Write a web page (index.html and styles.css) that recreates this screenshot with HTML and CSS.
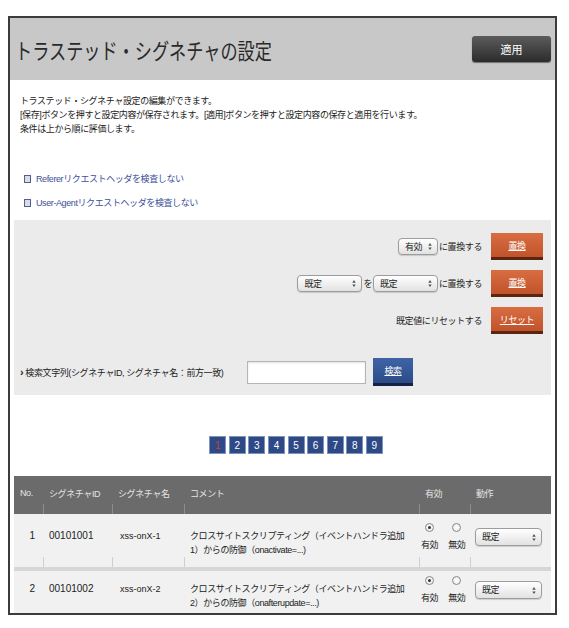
FILE: index.html
```html
<!DOCTYPE html>
<html lang="ja">
<head>
    <meta charset="UTF-8">
    <title>トラステッド・シグネチャの設定</title>
    <link rel="stylesheet" href="styles.css">
</head>
<body>
    <div class="frame">
        <div class="page-head">
            <h1>トラステッド・シグネチャの設定</h1>
            <a class="btn-apply">適用</a>
        </div>

        <div class="intro">
            <p>トラステッド・シグネチャ設定の編集ができます。<br>[保存]ボタンを押すと設定内容が保存されます。[適用]ボタンを押すと設定内容の保存と適用を行います。<br>条件は上から順に評価します。</p>
            <ul class="checks">
                <li><span class="box"></span>Refererリクエストヘッダを検査しない</li>
                <li><span class="box"></span>User-Agentリクエストヘッダを検査しない</li>
            </ul>
        </div>

        <!-- bulk actions + search -->
        <div class="panel">
            <div class="panel-row">
                <span class="select sel-short">有効<svg class="arrows" viewBox="0 0 4 8"><path d="M0 3L2 0L4 3ZM0 5L2 8L4 5Z"/></svg></span>
                <span class="txt">に置換する</span>
                <a class="btn-orange">置換</a>
            </div>
            <div class="panel-row">
                <span class="select sel-long">既定<svg class="arrows" viewBox="0 0 4 8"><path d="M0 3L2 0L4 3ZM0 5L2 8L4 5Z"/></svg></span>
                <span class="txt">を</span>
                <span class="select sel-long">既定<svg class="arrows" viewBox="0 0 4 8"><path d="M0 3L2 0L4 3ZM0 5L2 8L4 5Z"/></svg></span>
                <span class="txt">に置換する</span>
                <a class="btn-orange">置換</a>
            </div>
            <div class="panel-row">
                <span class="txt">既定値にリセットする</span>
                <a class="btn-orange">リセット</a>
            </div>
            <div class="search-row">
                <label for="q"><b>›</b> 検索文字列(シグネチャID, シグネチャ名：前方一致)</label>
                <input type="text" id="q">
                <a class="btn-blue">検索</a>
            </div>
        </div>

        <div class="pager">
            <a class="current">1</a>
            <a>2</a>
            <a>3</a>
            <a>4</a>
            <a>5</a>
            <a>6</a>
            <a>7</a>
            <a>8</a>
            <a>9</a>
        </div>

        <table class="sig-table">
            <colgroup>
                <col class="c-no">
                <col class="c-id">
                <col class="c-name">
                <col class="c-comment">
                <col class="c-enable">
                <col class="c-action">
            </colgroup>
            <thead>
                <tr>
                    <th>No.</th>
                    <th>シグネチャID</th>
                    <th>シグネチャ名</th>
                    <th>コメント</th>
                    <th>有効</th>
                    <th>動作</th>
                </tr>
            </thead>
            <tbody>
                <tr>
                    <td class="no">1</td>
                    <td class="id">00101001</td>
                    <td class="name">xss-onX-1</td>
                    <td>クロスサイトスクリプティング（イベントハンドラ追加<br>1）からの防御（onactivate=...)</td>
                    <td class="enable">
                        <div class="opts">
                            <span class="opt"><span class="radio on"></span>有効</span>
                            <span class="opt"><span class="radio"></span>無効</span>
                        </div>
                    </td>
                    <td class="action"><span class="select sel-action">既定<svg class="arrows" viewBox="0 0 4 8"><path d="M0 3L2 0L4 3ZM0 5L2 8L4 5Z"/></svg></span></td>
                </tr>
                <tr>
                    <td class="no">2</td>
                    <td class="id">00101002</td>
                    <td class="name">xss-onX-2</td>
                    <td>クロスサイトスクリプティング（イベントハンドラ追加<br>2）からの防御（onafterupdate=...)</td>
                    <td class="enable">
                        <div class="opts">
                            <span class="opt"><span class="radio on"></span>有効</span>
                            <span class="opt"><span class="radio"></span>無効</span>
                        </div>
                    </td>
                    <td class="action"><span class="select sel-action">既定<svg class="arrows" viewBox="0 0 4 8"><path d="M0 3L2 0L4 3ZM0 5L2 8L4 5Z"/></svg></span></td>
                </tr>
            </tbody>
        </table>
    </div>
</body>
</html>
```

FILE: styles.css
```css
body {
    margin: 0;
    padding: 16px 0 0 8px;
    background: #fff;
    font-family: "Liberation Sans", "Noto Sans CJK JP", sans-serif;
    font-size: 9px;
    letter-spacing: -0.4px;
    color: #222;
}

a {
    cursor: pointer;
}

.frame {
    width: 545px;
    height: 595px;
    border: 2px solid #3c3c3c;
    overflow: hidden;
}

/* Title bar */
.page-head {
    height: 62px;
    background: #c8c8c8;
    display: flex;
    align-items: center;
    justify-content: space-between;
    padding: 0 4px 0 5px;
}

.page-head h1 {
    margin: 0;
    font-size: 22px;
    font-weight: normal;
    letter-spacing: 0;
    color: #2a2a2a;
    white-space: nowrap;
    transform: scaleX(0.78);
    transform-origin: left center;
}

.btn-apply {
    width: 79px;
    height: 26px;
    display: flex;
    align-items: center;
    justify-content: center;
    background: linear-gradient(#5c5c5c, #2c2c2c);
    border-radius: 3px;
    box-shadow: 0 1px 1px rgba(0, 0, 0, 0.45);
    color: #fff;
    font-size: 11px;
    letter-spacing: 0;
}

/* Description */
.intro {
    padding: 14px 10px 0;
    line-height: 14px;
}

.intro p {
    margin: 0;
}

.checks {
    list-style: none;
    margin: 36px 0 0;
    padding: 0 0 0 4px;
}

.checks li {
    display: flex;
    align-items: center;
    gap: 5px;
    height: 14px;
    margin-bottom: 10px;
    color: #3d4f9a;
}

.checks .box {
    width: 5px;
    height: 6px;
    border: 1px solid #55608a;
    background: #d9dcea;
}

/* Gray action panel */
.panel {
    margin: 0 4px;
    padding: 13px 8px 9px 6px;
    background: #ebebeb;
    display: flex;
    flex-direction: column;
    gap: 10px;
}

.panel-row {
    display: flex;
    justify-content: flex-end;
    align-items: center;
    height: 27px;
}

.panel-row .txt {
    margin: 0 1px;
}

.select {
    display: inline-flex;
    align-items: center;
    justify-content: space-between;
    box-sizing: border-box;
    height: 17px;
    padding: 0 5px 0 6px;
    border: 1px solid #9c9c9c;
    border-radius: 4px;
    background: linear-gradient(#fff, #e2e2e2);
    box-shadow: 0 1px 1px rgba(0, 0, 0, 0.15);
    color: #222;
}

.arrows {
    width: 4px;
    height: 7px;
    fill: #555;
}

.sel-short {
    width: 40px;
}

.sel-long {
    width: 65px;
}

.btn-orange {
    width: 52px;
    height: 24px;
    margin-left: 8px;
    display: flex;
    align-items: center;
    justify-content: center;
    background: linear-gradient(#d96d42, #c0532a);
    border-bottom: 3px solid #5a2611;
    color: #fff;
    text-decoration: underline;
}

.search-row {
    display: flex;
    align-items: center;
    height: 28px;
    margin-top: 14px;
}

.search-row label {
    flex: 0 0 227px;
}

.search-row label b {
    font-size: 11px;
}

.search-row input {
    box-sizing: border-box;
    width: 119px;
    height: 23px;
    margin: 0;
    border: 1px solid #b5b5b5;
    background: #fff;
    box-shadow: inset 0 1px 2px rgba(0, 0, 0, 0.12);
}

.btn-blue {
    width: 40px;
    height: 25px;
    margin-left: 7px;
    display: flex;
    align-items: center;
    justify-content: center;
    background: linear-gradient(#3f64a6, #2b4b88);
    border-bottom: 3px solid #152446;
    color: #fff;
    text-decoration: underline;
}

/* Pagination */
.pager {
    display: flex;
    justify-content: center;
    gap: 4.6px;
    margin-top: 42px;
    padding-left: 27px;
}

.pager a {
    width: 15px;
    height: 16px;
    display: flex;
    align-items: center;
    justify-content: center;
    background: #2d4a86;
    box-shadow: 0 0 0 1px #8093bb;
    color: #fff;
    font-size: 10px;
    letter-spacing: 0;
}

.pager a.current {
    color: #d23a3a;
}

/* Signature table */
.sig-table {
    width: 537px;
    margin: 23px 4px 0;
    border-collapse: collapse;
    table-layout: fixed;
}

.c-no { width: 29px; }
.c-id { width: 69px; }
.c-name { width: 72px; }
.c-comment { width: 235px; }
.c-enable { width: 51px; }
.c-action { width: 81px; }

.sig-table th {
    box-sizing: border-box;
    height: 38px;
    padding: 0 0 4px 6px;
    background: #6b6b6b linear-gradient(#8c8c8c, #8c8c8c) left bottom / 1px 10px no-repeat;
    color: #e4e4e4;
    font-weight: normal;
    text-align: left;
}

.sig-table th:first-child {
    background-image: none;
}

.sig-table td {
    box-sizing: border-box;
    height: 55px;
    padding: 15px 6px 0;
    vertical-align: top;
    line-height: 14px;
    background: #f1f1f1 linear-gradient(#cfcfcf, #cfcfcf) left bottom / 1px 10px no-repeat;
}

.sig-table td:first-child {
    background-image: none;
}

.sig-table tbody tr + tr td {
    border-top: 4px solid #d6d6d6;
    padding-top: 11px;
}

.sig-table td.no {
    padding-right: 8px;
    text-align: right;
    font-size: 10px;
    letter-spacing: 0;
}

.sig-table td.id {
    font-size: 10px;
    letter-spacing: 0;
}

.sig-table td.name {
    padding-left: 8px;
    letter-spacing: 0;
}

.sig-table td.enable {
    padding: 9px 0 0 2px;
}

.sig-table tbody tr + tr td.enable {
    padding-top: 5px;
}

.opts {
    display: flex;
    gap: 10px;
}

.opt {
    display: flex;
    flex-direction: column;
    align-items: center;
    gap: 8px;
    line-height: 11px;
}

.radio {
    width: 9px;
    height: 9px;
    box-sizing: border-box;
    border: 1px solid #8a8a8a;
    border-radius: 50%;
    background: radial-gradient(#fff, #e6e6e6);
    display: flex;
    align-items: center;
    justify-content: center;
}

.radio.on::after {
    content: "";
    width: 3px;
    height: 3px;
    border-radius: 50%;
    background: #333;
}

.sig-table td.action {
    padding: 14px 0 0 5px;
}

.sig-table tbody tr + tr td.action {
    padding-top: 10px;
}

.sel-action {
    width: 67px;
    height: 18px;
}
```
